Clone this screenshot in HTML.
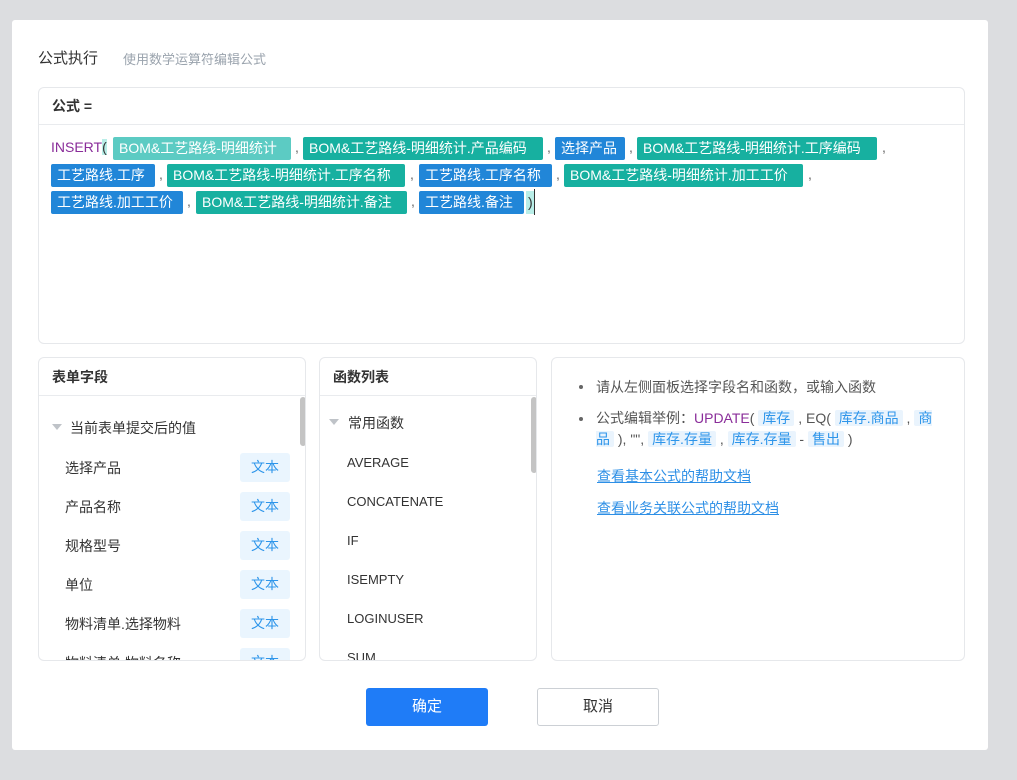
<!DOCTYPE html>
<html><head><meta charset="utf-8"><style>
*{margin:0;padding:0;box-sizing:border-box}
body{width:1017px;height:780px;overflow:hidden;background:#dcdde0;font-family:"Liberation Sans","Noto Sans CJK SC",sans-serif;position:relative;color:#333}
.a{position:absolute}
.dlg{left:12px;top:20px;width:976px;height:730px;background:#fff;border-radius:3px}
.box{border:1px solid #e6e8eb;border-radius:6px;background:#fff}
.t{position:absolute;height:23px;line-height:23px;color:#fff;font-size:14px;padding:0 6px;border-radius:2px;white-space:nowrap}
.g{background:#17b0a0}.b{background:#2186d8}.lg{background:#5ccbc3}
.c{position:absolute;font-size:14px;color:#666}
.hd{position:absolute;left:0;right:0;top:0;height:38px;border-bottom:1px solid #e9ebee;font-size:14px;font-weight:bold;color:#333;line-height:38px;padding-left:13px}
.it{position:absolute;font-size:14px;color:#333}
.tx{position:absolute;left:201px;width:50px;height:29px;background:#eaf5fe;color:#2d95ea;border-radius:3px;font-size:14px;text-align:center;line-height:29px}
.fn{position:absolute;left:27px;font-size:13px;color:#333}
.tri{position:absolute;width:0;height:0;border-left:5px solid transparent;border-right:5px solid transparent;border-top:6px solid #bfc3c8}
.sb{position:absolute;width:6px;border-radius:3px;background:#c4c4c4}
.pk{background:#eaf4fd;color:#2d95ea;padding:0 4px;border-radius:2px}
</style></head><body>
<div class="a dlg"></div>
<div class="a" style="left:38px;top:47px;font-size:15px;color:#333">公式执行</div>
<div class="a" style="left:123px;top:49px;font-size:13px;color:#9aa3ad">使用数学运算符编辑公式</div>

<div class="a box" style="left:38px;top:87px;width:927px;height:257px">
 <div class="hd" style="height:37px;line-height:36px">公式 =</div>
</div>
<div class="a" style="left:51px;top:139px;font-size:14px;color:#8a2d9a">INSERT<span style="background:#b9eee8;color:#333">(</span></div>
<div class="t lg" style="left:113px;top:137px;width:178px">BOM&amp;工艺路线-明细统计</div>
<div class="c" style="left:295px;top:139px">,</div>
<div class="t g" style="left:303px;top:137px;width:240px">BOM&amp;工艺路线-明细统计.产品编码</div>
<div class="c" style="left:547px;top:139px">,</div>
<div class="t b" style="left:555px;top:137px;width:70px">选择产品</div>
<div class="c" style="left:629px;top:139px">,</div>
<div class="t g" style="left:637px;top:137px;width:240px">BOM&amp;工艺路线-明细统计.工序编码</div>
<div class="c" style="left:882px;top:139px">,</div>

<div class="t b" style="left:51px;top:164px;width:104px">工艺路线.工序</div>
<div class="c" style="left:159px;top:166px">,</div>
<div class="t g" style="left:167px;top:164px;width:238px">BOM&amp;工艺路线-明细统计.工序名称</div>
<div class="c" style="left:410px;top:166px">,</div>
<div class="t b" style="left:419px;top:164px;width:133px">工艺路线.工序名称</div>
<div class="c" style="left:556px;top:166px">,</div>
<div class="t g" style="left:564px;top:164px;width:239px">BOM&amp;工艺路线-明细统计.加工工价</div>
<div class="c" style="left:808px;top:166px">,</div>

<div class="t b" style="left:51px;top:191px;width:132px">工艺路线.加工工价</div>
<div class="c" style="left:187px;top:193px">,</div>
<div class="t g" style="left:196px;top:191px;width:211px">BOM&amp;工艺路线-明细统计.备注</div>
<div class="c" style="left:411px;top:193px">,</div>
<div class="t b" style="left:419px;top:191px;width:105px">工艺路线.备注</div>
<div class="a" style="left:526px;top:191px;height:23px;line-height:23px;font-size:14px;background:#b9eee8;padding:0 2px">)</div>
<div class="a" style="left:534px;top:189px;width:1px;height:26px;background:#333"></div>

<div class="a box" style="left:38px;top:357px;width:268px;height:304px;overflow:hidden">
 <div class="hd">表单字段</div>
 <div class="tri" style="left:13px;top:66px"></div>
 <div class="it" style="left:31px;top:60px">当前表单提交后的值</div>
 <div class="it" style="left:26px;top:100px">选择产品</div><div class="tx" style="top:95px">文本</div>
 <div class="it" style="left:26px;top:139px">产品名称</div><div class="tx" style="top:134px">文本</div>
 <div class="it" style="left:26px;top:178px">规格型号</div><div class="tx" style="top:173px">文本</div>
 <div class="it" style="left:26px;top:217px">单位</div><div class="tx" style="top:212px">文本</div>
 <div class="it" style="left:26px;top:256px">物料清单.选择物料</div><div class="tx" style="top:251px">文本</div>
 <div class="it" style="left:26px;top:295px">物料清单.物料名称</div><div class="tx" style="top:290px">文本</div>
 <div class="sb" style="left:261px;top:39px;height:49px"></div>
</div>

<div class="a box" style="left:319px;top:357px;width:218px;height:304px;overflow:hidden">
 <div class="hd">函数列表</div>
 <div class="tri" style="left:9px;top:61px"></div>
 <div class="it" style="left:28px;top:55px;font-size:14px">常用函数</div>
 <div class="fn" style="top:97px">AVERAGE</div>
 <div class="fn" style="top:136px">CONCATENATE</div>
 <div class="fn" style="top:175px">IF</div>
 <div class="fn" style="top:214px">ISEMPTY</div>
 <div class="fn" style="top:253px">LOGINUSER</div>
 <div class="fn" style="top:292px">SUM</div>
 <div class="sb" style="left:211px;top:39px;height:76px"></div>
</div>

<div class="a box" style="left:551px;top:357px;width:414px;height:304px;font-size:14px;color:#555">
 <div class="a" style="left:27px;top:27px;width:4px;height:4px;border-radius:2px;background:#666"></div>
 <div class="a" style="left:44px;top:19px">请从左侧面板选择字段名和函数，或输入函数</div>
 <div class="a" style="left:27px;top:59px;width:4px;height:4px;border-radius:2px;background:#666"></div>
 <div class="a" style="left:44px;top:50px;width:350px;line-height:21px">公式编辑举例：<span style="color:#8a2d9a">UPDATE</span>( <span class="pk">库存</span> , EQ( <span class="pk">库存.商品</span> , <span class="pk">商品</span> ), "", <span class="pk">库存.存量</span> , <span class="pk">库存.存量</span> - <span class="pk">售出</span> )</div>
 <div class="a" style="left:45px;top:108px;color:#2d8fe6;text-decoration:underline">查看基本公式的帮助文档</div>
 <div class="a" style="left:45px;top:140px;color:#2d8fe6;text-decoration:underline">查看业务关联公式的帮助文档</div>
</div>

<div class="a" style="left:366px;top:688px;width:122px;height:38px;background:#1f7cf7;color:#fff;border-radius:3px;text-align:center;line-height:38px;font-size:15px">确定</div>
<div class="a" style="left:537px;top:688px;width:122px;height:38px;border:1px solid #ccd0d5;color:#333;border-radius:3px;text-align:center;line-height:36px;font-size:15px;background:#fff">取消</div>
</body></html>
